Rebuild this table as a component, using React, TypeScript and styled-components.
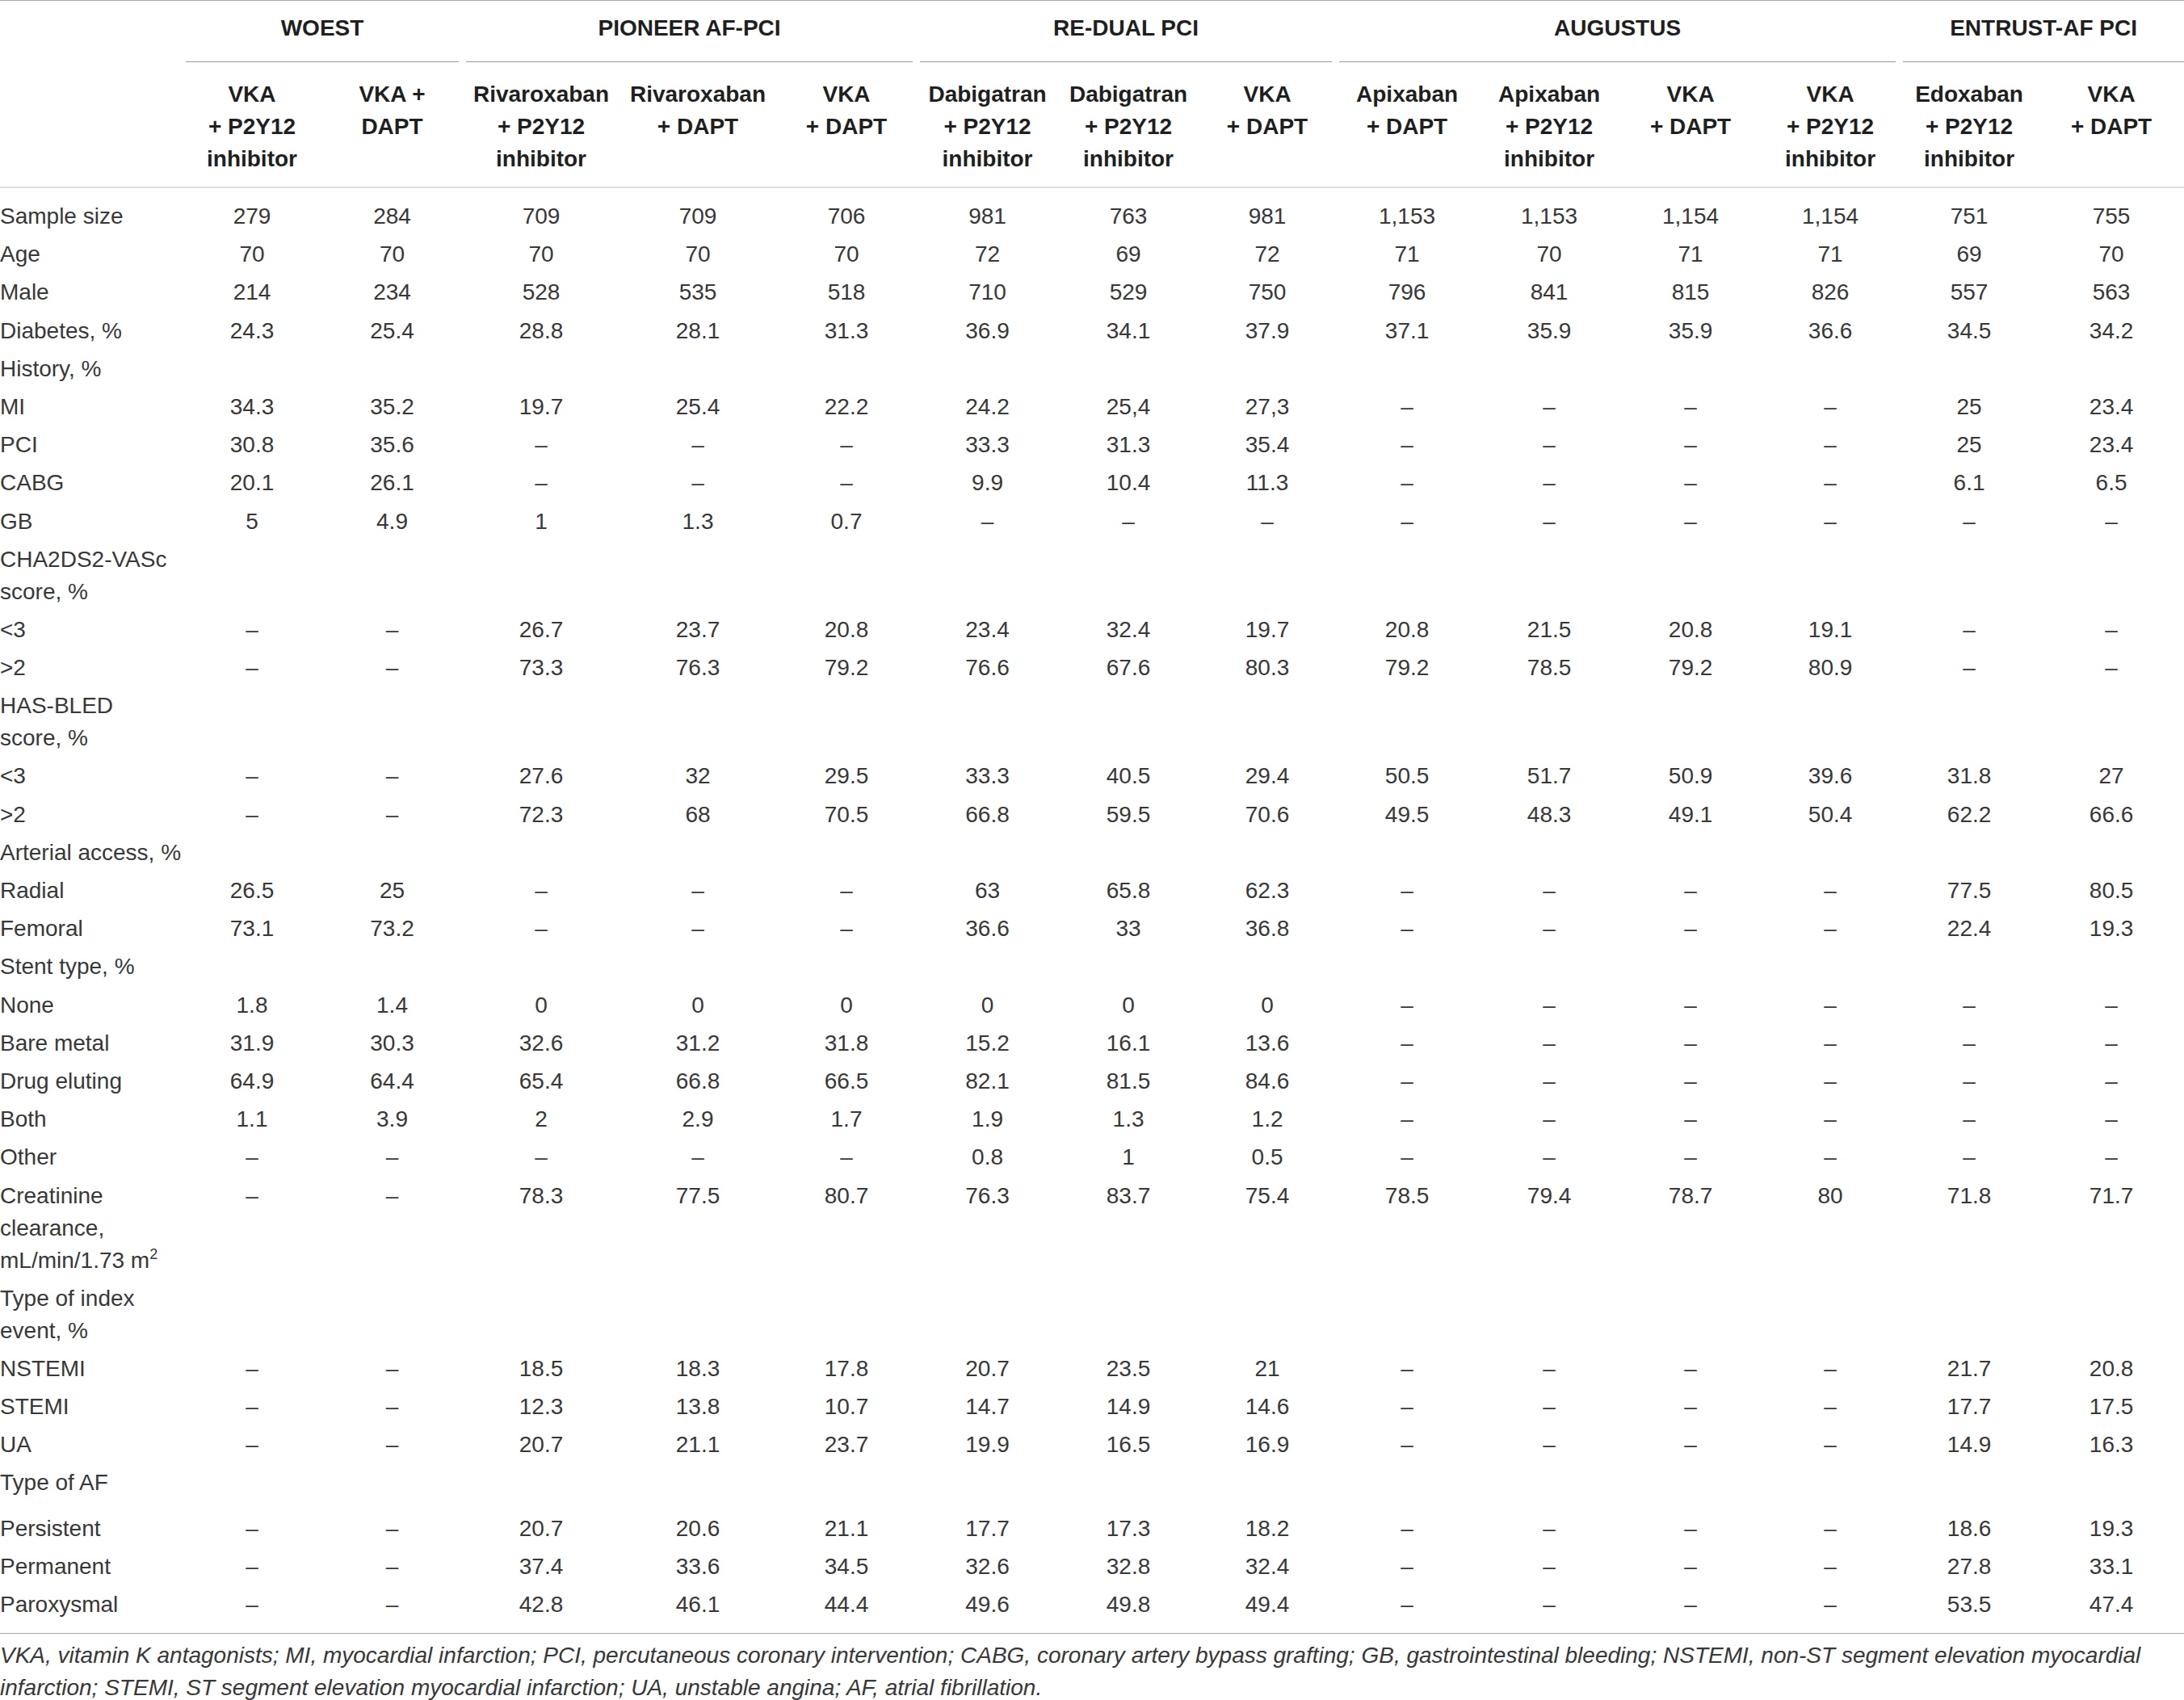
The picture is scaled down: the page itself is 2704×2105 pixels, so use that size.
import React from "react";
import styled, { createGlobalStyle } from "styled-components";

const Global = createGlobalStyle`
  html, body { margin: 0; padding: 0; background: #ffffff; }
  body { font-family: "Liberation Sans", Arial, sans-serif; }
`;

const Page = styled.div`
  width: 2704px;
  font-family: "Liberation Sans", Arial, sans-serif;
  font-size: 28px;
  line-height: 40px;
  color: #383838;
`;

const Table = styled.table`
  width: 2704px;
  table-layout: fixed;
  border-collapse: collapse;
  border-top: 1px solid #a8a8a8;
  border-bottom: 1px solid #a8a8a8;
`;

const GroupCell = styled.th`
  padding: 14px 0 0 0;
  font-weight: 700;
  color: #1f1f1f;
  text-align: center;
  white-space: nowrap;
  vertical-align: top;
`;

const GroupRule = styled.div<{ $last?: boolean }>`
  padding-bottom: 21px;
  border-bottom: 1px solid #9a9a9a;
  margin: 0 ${(p) => (p.$last ? "0" : "5px")} 0 4px;
`;

const HeadRow = styled.tr`
  border-bottom: 2px solid #dcdcdc;
`;

const SubCell = styled.th`
  padding: 20px 0 14px 0;
  font-weight: 700;
  color: #1f1f1f;
  text-align: center;
  white-space: nowrap;
  vertical-align: top;
`;

const Line = styled.span`
  display: block;
`;

const LabelCell = styled.td<{ $top: number; $bottom: number }>`
  padding: ${(p) => p.$top}px 0 ${(p) => p.$bottom}px 0;
  text-align: left;
  white-space: nowrap;
  vertical-align: top;
`;

const ValueCell = styled.td<{ $top: number; $bottom: number }>`
  padding: ${(p) => p.$top}px 0 ${(p) => p.$bottom}px 0;
  text-align: center;
  white-space: nowrap;
  vertical-align: top;
`;

const Sup = styled.sup`
  font-size: 18px;
  line-height: 0;
  vertical-align: 11px;
`;

const Footnote = styled.p`
  margin: 7px 0 0 0;
  font-style: italic;
  color: #383838;
  font-size: 28px;
  line-height: 40px;
`;

const widths = [226, 172, 175, 194, 194, 174, 175, 174, 170, 176, 176, 174, 172, 172, 180];

const groups = [
  { name: "WOEST", span: 2 },
  { name: "PIONEER AF-PCI", span: 3 },
  { name: "RE-DUAL PCI", span: 3 },
  { name: "AUGUSTUS", span: 4 },
  { name: "ENTRUST-AF PCI", span: 2 },
];

const subHeads: string[][] = [
  ["VKA", "+ P2Y12", "inhibitor"],
  ["VKA +", "DAPT"],
  ["Rivaroxaban", "+ P2Y12", "inhibitor"],
  ["Rivaroxaban", "+ DAPT"],
  ["VKA", "+ DAPT"],
  ["Dabigatran", "+ P2Y12", "inhibitor"],
  ["Dabigatran", "+ P2Y12", "inhibitor"],
  ["VKA", "+ DAPT"],
  ["Apixaban", "+ DAPT"],
  ["Apixaban", "+ P2Y12", "inhibitor"],
  ["VKA", "+ DAPT"],
  ["VKA", "+ P2Y12", "inhibitor"],
  ["Edoxaban", "+ P2Y12", "inhibitor"],
  ["VKA", "+ DAPT"],
];

const D = "–";
const dashes = (n: number) => Array(n).fill(D);

type Row = { label: React.ReactNode[]; values: string[]; gapBefore?: number };

const rows: Row[] = [
  { label: ["Sample size"], values: ["279", "284", "709", "709", "706", "981", "763", "981", "1,153", "1,153", "1,154", "1,154", "751", "755"] },
  { label: ["Age"], values: ["70", "70", "70", "70", "70", "72", "69", "72", "71", "70", "71", "71", "69", "70"] },
  { label: ["Male"], values: ["214", "234", "528", "535", "518", "710", "529", "750", "796", "841", "815", "826", "557", "563"] },
  { label: ["Diabetes, %"], values: ["24.3", "25.4", "28.8", "28.1", "31.3", "36.9", "34.1", "37.9", "37.1", "35.9", "35.9", "36.6", "34.5", "34.2"] },
  { label: ["History, %"], values: Array(14).fill("") },
  { label: ["MI"], values: ["34.3", "35.2", "19.7", "25.4", "22.2", "24.2", "25,4", "27,3", D, D, D, D, "25", "23.4"] },
  { label: ["PCI"], values: ["30.8", "35.6", D, D, D, "33.3", "31.3", "35.4", D, D, D, D, "25", "23.4"] },
  { label: ["CABG"], values: ["20.1", "26.1", D, D, D, "9.9", "10.4", "11.3", D, D, D, D, "6.1", "6.5"] },
  { label: ["GB"], values: ["5", "4.9", "1", "1.3", "0.7", ...dashes(9)] },
  { label: ["CHA2DS2-VASc", "score, %"], values: Array(14).fill("") },
  { label: ["<3"], values: [D, D, "26.7", "23.7", "20.8", "23.4", "32.4", "19.7", "20.8", "21.5", "20.8", "19.1", D, D] },
  { label: [">2"], values: [D, D, "73.3", "76.3", "79.2", "76.6", "67.6", "80.3", "79.2", "78.5", "79.2", "80.9", D, D] },
  { label: ["HAS-BLED", "score, %"], values: Array(14).fill("") },
  { label: ["<3"], values: [D, D, "27.6", "32", "29.5", "33.3", "40.5", "29.4", "50.5", "51.7", "50.9", "39.6", "31.8", "27"] },
  { label: [">2"], values: [D, D, "72.3", "68", "70.5", "66.8", "59.5", "70.6", "49.5", "48.3", "49.1", "50.4", "62.2", "66.6"] },
  { label: ["Arterial access, %"], values: Array(14).fill("") },
  { label: ["Radial"], values: ["26.5", "25", D, D, D, "63", "65.8", "62.3", D, D, D, D, "77.5", "80.5"] },
  { label: ["Femoral"], values: ["73.1", "73.2", D, D, D, "36.6", "33", "36.8", D, D, D, D, "22.4", "19.3"] },
  { label: ["Stent type, %"], values: Array(14).fill("") },
  { label: ["None"], values: ["1.8", "1.4", "0", "0", "0", "0", "0", "0", ...dashes(6)] },
  { label: ["Bare metal"], values: ["31.9", "30.3", "32.6", "31.2", "31.8", "15.2", "16.1", "13.6", ...dashes(6)] },
  { label: ["Drug eluting"], values: ["64.9", "64.4", "65.4", "66.8", "66.5", "82.1", "81.5", "84.6", ...dashes(6)] },
  { label: ["Both"], values: ["1.1", "3.9", "2", "2.9", "1.7", "1.9", "1.3", "1.2", ...dashes(6)] },
  { label: ["Other"], values: [D, D, D, D, D, "0.8", "1", "0.5", ...dashes(6)] },
  {
    label: ["Creatinine", "clearance,", <>mL/min/1.73 m<Sup>2</Sup></>],
    values: [D, D, "78.3", "77.5", "80.7", "76.3", "83.7", "75.4", "78.5", "79.4", "78.7", "80", "71.8", "71.7"],
  },
  { label: ["Type of index", "event, %"], values: Array(14).fill("") },
  { label: ["NSTEMI"], values: [D, D, "18.5", "18.3", "17.8", "20.7", "23.5", "21", D, D, D, D, "21.7", "20.8"] },
  { label: ["STEMI"], values: [D, D, "12.3", "13.8", "10.7", "14.7", "14.9", "14.6", D, D, D, D, "17.7", "17.5"] },
  { label: ["UA"], values: [D, D, "20.7", "21.1", "23.7", "19.9", "16.5", "16.9", D, D, D, D, "14.9", "16.3"] },
  { label: ["Type of AF"], values: Array(14).fill("") },
  { label: ["Persistent"], values: [D, D, "20.7", "20.6", "21.1", "17.7", "17.3", "18.2", D, D, D, D, "18.6", "19.3"], gapBefore: 9 },
  { label: ["Permanent"], values: [D, D, "37.4", "33.6", "34.5", "32.6", "32.8", "32.4", D, D, D, D, "27.8", "33.1"] },
  { label: ["Paroxysmal"], values: [D, D, "42.8", "46.1", "44.4", "49.6", "49.8", "49.4", D, D, D, D, "53.5", "47.4"] },
];

const PAD = 3.6;

export default function App() {
  return (
    <Page>
      <Global />
      <Table>
        <colgroup>
          {widths.map((w, i) => (
            <col key={i} style={{ width: w }} />
          ))}
        </colgroup>
        <thead>
          <tr>
            <GroupCell />
            {groups.map((g, i) => (
              <GroupCell key={g.name} colSpan={g.span}>
                <GroupRule $last={i === groups.length - 1}>{g.name}</GroupRule>
              </GroupCell>
            ))}
          </tr>
          <HeadRow>
            <SubCell />
            {subHeads.map((lines, i) => (
              <SubCell key={i}>
                {lines.map((l, j) => (
                  <Line key={j}>{l}</Line>
                ))}
              </SubCell>
            ))}
          </HeadRow>
        </thead>
        <tbody>
          {rows.map((r, i) => {
            const top = (i === 0 ? 15 : PAD) + (r.gapBefore ?? 0);
            const bottom = i === rows.length - 1 ? 15 : PAD;
            return (
              <tr key={i}>
                <LabelCell $top={top} $bottom={bottom}>
                  {r.label.map((l, j) => (
                    <Line key={j}>{l}</Line>
                  ))}
                </LabelCell>
                {r.values.map((v, j) => (
                  <ValueCell key={j} $top={top} $bottom={bottom}>
                    {v}
                  </ValueCell>
                ))}
              </tr>
            );
          })}
        </tbody>
      </Table>
      <Footnote>
        VKA, vitamin K antagonists; MI, myocardial infarction; PCI, percutaneous coronary intervention; CABG, coronary
        artery bypass grafting; GB, gastrointestinal bleeding; NSTEMI, non-ST segment elevation myocardial infarction;
        STEMI, ST segment elevation myocardial infarction; UA, unstable angina; AF, atrial fibrillation.
      </Footnote>
    </Page>
  );
}
